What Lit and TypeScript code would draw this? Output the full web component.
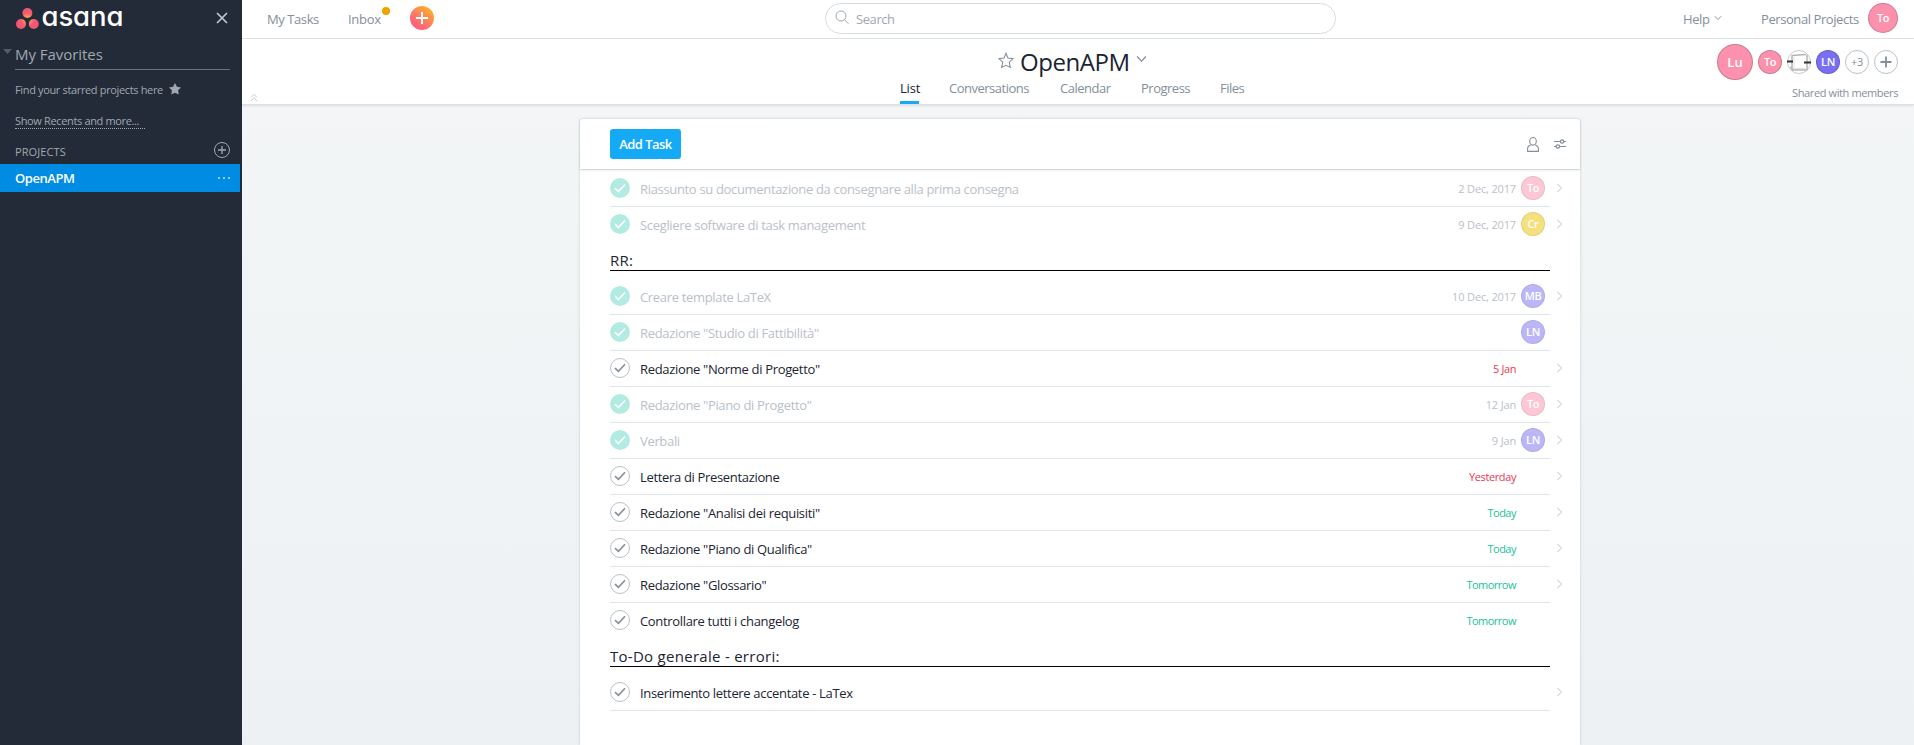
import { LitElement, html, css, svg, nothing } from "lit";
import { customElement, property } from "lit/decorators.js";
import { classMap } from "lit/directives/class-map.js";

interface Task {
  name: string;
  done?: boolean;
  date?: string;
  tone?: "late" | "soon";
  who?: string;
  color?: string;
  noArrow?: boolean;
  noLine?: boolean;
  section?: boolean;
}

const tasks: Task[] = [
  { name: "Riassunto su documentazione da consegnare alla prima consegna", done: true, date: "2 Dec, 2017", who: "To", color: "pink" },
  { name: "Scegliere software di task management", done: true, date: "9 Dec, 2017", who: "Cr", color: "yellow", noLine: true },
  { name: "RR:", section: true },
  { name: "Creare template LaTeX", done: true, date: "10 Dec, 2017", who: "MB", color: "violet" },
  { name: 'Redazione "Studio di Fattibilità"', done: true, who: "LN", color: "violet", noArrow: true },
  { name: 'Redazione "Norme di Progetto"', date: "5 Jan", tone: "late" },
  { name: 'Redazione "Piano di Progetto"', done: true, date: "12 Jan", who: "To", color: "pink" },
  { name: "Verbali", done: true, date: "9 Jan", who: "LN", color: "violet" },
  { name: "Lettera di Presentazione", date: "Yesterday", tone: "late" },
  { name: 'Redazione "Analisi dei requisiti"', date: "Today", tone: "soon" },
  { name: 'Redazione "Piano di Qualifica"', date: "Today", tone: "soon" },
  { name: 'Redazione "Glossario"', date: "Tomorrow", tone: "soon" },
  { name: "Controllare tutti i changelog", date: "Tomorrow", tone: "soon", noArrow: true, noLine: true },
  { name: "To-Do generale - errori:", section: true },
  { name: "Inserimento lettere accentate - LaTex" },
];

const chevronDown = (w: number, h: number) => html`<svg width=${w} height=${h} viewBox="0 0 10 6" fill="none" stroke="#848f99" stroke-width="1.2"><path d="M1 .8 5 4.9 9 .8" /></svg>`;

@customElement("user-avatar")
class UserAvatar extends LitElement {
  @property() name = "";
  @property() color = "pink";
  @property() size = "s";
  static styles = css`
    :host { display: block; flex: none; }
    .disc {
      box-sizing: border-box; width: 24px; height: 24px; border-radius: 50%;
      border: 1px solid rgba(0, 0, 0, 0.17); color: #fff;
      font: 600 11px/22px "Open Sans", sans-serif; text-align: center; letter-spacing: -0.35px;
    }
    .m { width: 30px; height: 30px; line-height: 28px; }
    .l { width: 36px; height: 36px; font-size: 13px; line-height: 35px; letter-spacing: 0; }
    .pink { background: #fc91ad; }
    .violet { background: #7a6ff0; }
    .yellow { background: #eec300; }
  `;
  render() {
    return html`<div class="disc ${this.color} ${this.size}">${this.name}</div>`;
  }
}

@customElement("task-row")
class TaskRow extends LitElement {
  @property({ attribute: false }) task!: Task;
  static styles = css`
    :host { display: block; }
    .section {
      box-sizing: border-box; height: 28px; margin-bottom: 8px; width: 940px;
      border-bottom: 1px solid #000; color: #1b2432;
      font: 500 15px/35px "Open Sans", sans-serif; letter-spacing: 0.28px; white-space: nowrap;
    }
    .row { display: flex; height: 36px; }
    .body { display: flex; box-sizing: border-box; width: 940px; height: 36px; border-bottom: 1px solid #e0e6e8; }
    .noline .body { border-color: transparent; }
    .check { flex: none; width: 20px; height: 20px; margin: 7px 10px 0 0; }
    .name { flex: 1; font-size: 13px; line-height: 36px; color: #1b2432; letter-spacing: -0.33px; white-space: nowrap; }
    .date { font-size: 11px; line-height: 35px; margin-right: 5px; letter-spacing: -0.15px; color: #848f99; }
    .date.late { color: #e8384f; letter-spacing: -0.4px; }
    .date.soon { color: #19bf9c; letter-spacing: -0.5px; }
    .slot { width: 24px; margin: 5px 5px 0 0; }
    .done .name, .done .date { color: #b9c1c8; }
    .done .slot { opacity: 0.5; }
    .arrow { margin: 12px 0 0 6px; }
  `;
  render() {
    const t = this.task;
    if (t.section) return html`<div class="section">${t.name}</div>`;
    return html`<div class=${classMap({ row: true, done: !!t.done, noline: !!t.noLine })}>
      <div class="body">
        <svg class="check" viewBox="0 0 20 20" fill="none">
          ${t.done
            ? svg`<circle cx="10" cy="10" r="10" fill="#b2ebe2"/><path d="M5 10.2 8.4 13.5 15 6.5" stroke="#fff" stroke-width="1.7"/>`
            : svg`<circle cx="10" cy="10" r="9.5" stroke="#b9c1c8"/><path d="M5 10.2 8.4 13.3 15 6.2" stroke="#848f99" stroke-width="1.6"/>`}
        </svg>
        <div class="name">${t.name}</div>
        ${t.date ? html`<div class="date ${t.tone ?? ""}">${t.date}</div>` : nothing}
        <div class="slot">${t.who ? html`<user-avatar .name=${t.who} .color=${t.color!}></user-avatar>` : nothing}</div>
      </div>
      ${t.noArrow ? nothing : html`<svg class="arrow" width="7" height="10" viewBox="0 0 7 10" fill="none" stroke="#d5dcdf" stroke-width="1.2"><path d="M1.2 1 5.5 5 1.2 9" /></svg>`}
    </div>`;
  }
}

@customElement("side-bar")
class SideBar extends LitElement {
  static styles = css`
    :host { display: block; flex: none; width: 242px; height: 745px; background: #222b37; color: #a1a8b0; overflow: hidden; white-space: nowrap; }
    .brand { display: flex; height: 36px; padding-left: 16px; }
    .mark { margin-top: 8px; flex: none; }
    .word {
      width: 154px; margin-left: 2.5px; color: #fff; font: 500 27.5px/32px Inter, sans-serif;
      font-feature-settings: "cv11"; letter-spacing: -0.1px;
    }
    .close { margin: 12px 0 0 20.5px; flex: none; }
    .fav { display: flex; height: 34px; }
    .tri { margin: 13px 3px 0 3px; flex: none; }
    .fav span { box-sizing: border-box; height: 34px; width: 215px; border-bottom: 1px solid #697382; font-size: 15px; line-height: 36px; letter-spacing: -0.05px; }
    .hint { display: flex; height: 40px; padding-left: 15px; font-size: 11px; line-height: 40px; letter-spacing: -0.35px; }
    .hint svg { margin: 13px 0 0 6px; }
    .recents { height: 27px; display: flex; padding-left: 15px; font-size: 11px; line-height: 22px; letter-spacing: -0.35px; }
    .recents span { box-sizing: border-box; width: 130px; height: 19px; border-bottom: 1px dotted #a1a8b0; }
    .label { display: flex; height: 27px; padding: 0 12px 0 15px; font-size: 11px; line-height: 30px; letter-spacing: 0.1px; justify-content: space-between; }
    .label svg { margin-top: 5px; }
    .item { display: flex; box-sizing: border-box; width: 240px; height: 28px; padding: 0 10px 0 15px; justify-content: space-between; align-items: center; background: #008ce3; color: #fff; font-size: 13px; line-height: 28px; font-weight: 600; letter-spacing: -0.45px; }
  `;
  render() {
    return html`
      <div class="brand">
        <svg class="mark" width="23" height="21" viewBox="0 0 23 21">
          <defs><radialGradient id="g" gradientUnits="userSpaceOnUse" cx="11.5" cy="11.5" r="12"><stop offset="0" stop-color="#ffc050" /><stop offset=".3" stop-color="#fb8a5c" /><stop offset=".55" stop-color="#f65a72" /><stop offset="1" stop-color="#f05572" /></radialGradient></defs>
          <g fill="url(#g)"><circle cx="11.4" cy="5" r="5" /><circle cx="5" cy="16" r="5" /><circle cx="17.8" cy="16" r="5" /></g>
        </svg>
        <div class="word">asana</div>
        <svg class="close" width="12" height="12" viewBox="0 0 12 12" stroke="#c3c8ce" stroke-width="1.7"><path d="M1 1 11 11M11 1 1 11" /></svg>
      </div>
      <div class="fav"><svg class="tri" width="9" height="5" viewBox="0 0 9 5"><path d="M0 0H9L4.5 5Z" fill="#535c68" /></svg><span>My Favorites</span></div>
      <div class="hint">Find your starred projects here<svg width="12" height="12" viewBox="0 0 12 12"><path d="M6 0 7.9 3.7 12 4.4 9.1 7.3 9.7 11.6 6 9.7 2.3 11.6 2.9 7.3 0 4.4 4.1 3.7Z" fill="#a1a8b0" /></svg></div>
      <div class="recents"><span>Show Recents and more...</span></div>
      <div class="label">PROJECTS<svg width="16" height="16" viewBox="0 0 16 16" fill="none" stroke="#a1a8b0"><circle cx="8" cy="8" r="7.5" /><path d="M8 4V12M4 8H12" stroke-width="1.3" /></svg></div>
      <div class="item">OpenAPM<svg width="12" height="2" viewBox="0 0 12 2" fill="#8fcbf3"><path d="M0 0H2V2H0ZM5 0H7V2H5ZM10 0H12V2H10Z" /></svg></div>
    `;
  }
}

@customElement("app-root")
class AppRoot extends LitElement {
  static styles = css`
    :host { display: flex; width: 1914px; height: 745px; overflow: hidden; font-family: "Open Sans", sans-serif; color: #848f99; background: linear-gradient(#f4f6f7, #edf1f3); }
    .main { display: flex; flex-direction: column; width: 1672px; height: 745px; }
    .top { display: flex; box-sizing: border-box; height: 39px; flex: none; background: #fff; border-bottom: 1px solid #dce2e5; font-size: 13px; line-height: 38px; letter-spacing: -0.42px; padding: 0 16px 0 25px; }
    .tasks { width: 81px; }
    .inbox { width: 33px; letter-spacing: -0.3px; }
    .dot { width: 8px; height: 8px; border-radius: 50%; background: #f4a100; margin: 7px 20px 0 1px; }
    .plus { margin: 6px 0 0; }
    .search { display: flex; box-sizing: border-box; width: 511px; height: 31px; margin: 3px 347px 0 391px; padding-left: 9px; border: 1px solid #d5dde0; border-radius: 16px; line-height: 30px; color: #a1a8b0; }
    .search svg { margin: 6px 6px 0 0; }
    .help { display: flex; width: 78px; }
    .help svg { margin: 15px 0 0 5px; }
    .space { width: 107px; white-space: nowrap; }
    .me { padding-top: 3px; margin-left: auto; }
    .head { display: grid; grid-template-columns: 500px 672px 500px; height: 65px; flex: none; background: #fff; border-bottom: 1px solid #dde3e4; box-shadow: 0 1px 2px rgba(60, 80, 80, 0.12); z-index: 1; }
    .fold { margin: 54px 0 0 8px; }
    .title { display: flex; height: 36px; padding-left: 256px; color: #1b2432; font-size: 24px; font-weight: 500; line-height: 45px; letter-spacing: -0.45px; }
    .title .star { margin: 13px 6px 0 0; }
    .title .down { margin: 14px 0 0 6px; line-height: 0; }
    .tabs { display: flex; height: 29px; padding-left: 158px; font-size: 13px; line-height: 27px; letter-spacing: -0.5px; white-space: nowrap; }
    .tabs span { box-sizing: border-box; }
    .list { width: 19px; margin-right: 30px; color: #1b2432; letter-spacing: -0.2px; border-bottom: 3px solid #14aaf5; }
    .conv { width: 111px; }
    .cal { width: 81px; }
    .prog { width: 79px; }
    .people { display: flex; align-items: center; justify-content: flex-end; gap: 5px; height: 36px; padding: 5px 16px 0 0; }
    .round { box-sizing: border-box; width: 24px; height: 24px; border: 1px solid #b9c1c8; border-radius: 50%; font-size: 11px; line-height: 22px; text-align: center; letter-spacing: -0.3px; }
    .shared { text-align: right; padding-right: 16px; font-size: 11px; line-height: 26px; height: 24px; letter-spacing: -0.38px; }
    .card { box-sizing: border-box; width: 1000px; height: 626px; flex: none; margin: 14px 0 0 338px; background: #fff; border-radius: 3px 3px 0 0; box-shadow: 0 0 3px rgba(40, 60, 70, 0.22); }
    .bar { display: flex; height: 50px; border-radius: 3px 3px 0 0; box-shadow: 0 1px 2px rgba(40, 50, 60, 0.25); padding-left: 30px; }
    .add { width: 71px; height: 30px; margin: 10px 846px 0 0; flex: none; border-radius: 3px; background: #14aaf5; color: #fff; font-size: 13px; font-weight: 600; line-height: 31px; letter-spacing: -0.55px; text-align: center; }
    .tools { display: flex; gap: 15px; padding-top: 18px; }
    .tools svg { flex: none; }
    .sliders { margin-top: 2px; }
    .rows { padding: 2px 0 0 30px; }
  `;
  render() {
    return html`
      <side-bar></side-bar>
      <div class="main">
        <div class="top">
          <div class="tasks">My Tasks</div>
          <div class="inbox">Inbox</div>
          <div class="dot"></div>
          <svg class="plus" width="24" height="24" viewBox="0 0 24 24">
            <defs><linearGradient id="p" x1=".2" y1=".9" x2=".8" y2=".1"><stop offset="0" stop-color="#fc5c7f" /><stop offset=".45" stop-color="#fd7a66" /><stop offset="1" stop-color="#fdb02a" /></linearGradient></defs>
            <circle cx="12" cy="12" r="12" fill="url(#p)" /><path d="M12 6V18M6 12H18" stroke="#fff" stroke-width="2" />
          </svg>
          <div class="search"><svg width="15" height="15" viewBox="0 0 15 15" fill="none" stroke="#a1a8b0"><circle cx="6" cy="6" r="5" /><path d="M9.6 9.8 13.5 13.8" /></svg>Search</div>
          <div class="help">Help ${chevronDown(8, 6)}</div>
          <div class="space">Personal Projects</div>
          <div class="me"><user-avatar name="To" size="m"></user-avatar></div>
        </div>
        <div class="head">
          <svg class="fold" width="8" height="9" viewBox="0 0 8 9" fill="none" stroke="#c5cdd1"><path d="M1 4.5 4 1.2 7 4.5M1 8 4 4.7 7 8" /></svg>
          <div>
            <div class="title">
              <svg class="star" width="16" height="17" viewBox="0 0 15 16" fill="none" stroke="#848f99" stroke-width="1"><path d="M7.5 1.2 9.3 5.7 14.2 6.3 10.6 9.6 11.5 14.5 7.5 12.5 3.5 14.5 4.4 9.6 .8 6.3 5.7 5.7Z" /></svg>
              <span>OpenAPM</span><span class="down">${chevronDown(11, 12)}</span>
            </div>
            <div class="tabs"><span class="list">List</span><span class="conv">Conversations</span><span class="cal">Calendar</span><span class="prog">Progress</span><span>Files</span></div>
          </div>
          <div>
            <div class="people">
              <user-avatar name="Lu" size="l"></user-avatar>
              <user-avatar name="To"></user-avatar>
              <svg width="24" height="24" viewBox="0 0 24 24" fill="none">
                <circle cx="12" cy="12" r="11.5" fill="#fff" stroke="#c8c8c8" />
                <path d="M5 5.5 19 4.5M5 5V20M20 5V20M5 20H20M3 17 7 20" stroke="#b5b5b5" stroke-width="1.5" />
                <path d="M7 6.5V18.5H18" stroke="#dedede" />
                <path d="M0 11.5H6M17 12.5H24" stroke="#333" stroke-width="1.8" />
              </svg>
              <user-avatar name="LN" color="violet"></user-avatar>
              <div class="round">+3</div>
              <svg width="24" height="24" viewBox="0 0 24 24" fill="none"><circle cx="12" cy="12" r="11.5" stroke="#b9c1c8" /><path d="M12 6.5V17.5M6.5 12H17.5" stroke="#848f99" stroke-width="1.8" /></svg>
            </div>
            <div class="shared">Shared with members</div>
          </div>
        </div>
        <div class="card">
          <div class="bar">
            <div class="add">Add Task</div>
            <div class="tools">
              <svg width="12" height="15" viewBox="0 0 12 15" fill="none" stroke="#848f99" stroke-width="1.1"><ellipse cx="6" cy="4.3" rx="3.3" ry="3.8" /><path d="M3.9 8Q.6 8.6.6 12V14.4H11.4V12Q11.4 8.6 8.1 8" /></svg>
              <svg class="sliders" width="12" height="10" viewBox="0 0 12 10" fill="none" stroke="#848f99" stroke-width="1.2"><path d="M0 2.5H6.3M9.9 2.5H12M0 7.5H2.1M5.7 7.5H12" /><circle cx="8.1" cy="2.5" r="1.7" /><circle cx="3.9" cy="7.5" r="1.7" /></svg>
            </div>
          </div>
          <div class="rows">${tasks.map((t) => html`<task-row .task=${t}></task-row>`)}</div>
        </div>
      </div>
    `;
  }
}
